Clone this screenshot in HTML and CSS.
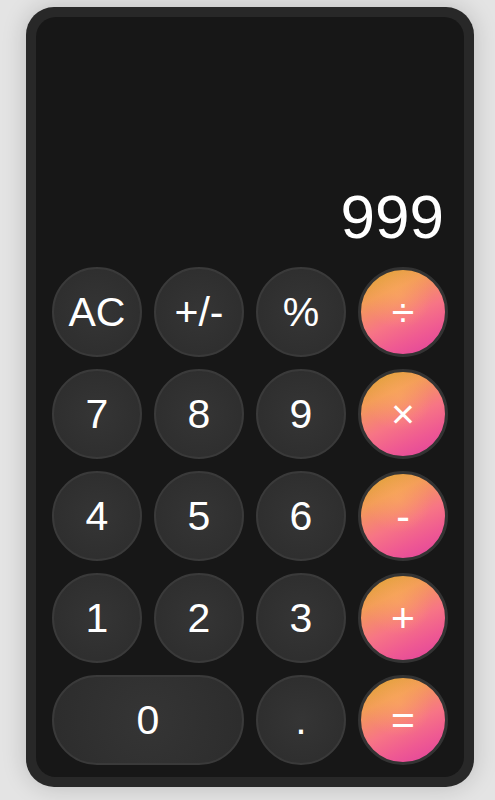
FILE: index.html
```html
<!DOCTYPE html>
<html>
<head>
<meta charset="utf-8">
<link rel="stylesheet" href="styles.css">
</head>
<body>
<div class="calc">
  <div class="screen">
    <div class="display">999</div>
    <div class="keys">
      <button class="key">AC</button>
      <button class="key">+/-</button>
      <button class="key">%</button>
      <button class="key op">÷</button>
      <button class="key">7</button>
      <button class="key">8</button>
      <button class="key">9</button>
      <button class="key op">×</button>
      <button class="key">4</button>
      <button class="key">5</button>
      <button class="key">6</button>
      <button class="key op">-</button>
      <button class="key">1</button>
      <button class="key">2</button>
      <button class="key">3</button>
      <button class="key op">+</button>
      <button class="key wide">0</button>
      <button class="key">.</button>
      <button class="key op">=</button>
    </div>
  </div>
</div>
</body>
</html>
```
FILE: styles.css
```css
html, body {
  margin: 0;
  padding: 0;
}
body {
  background: #e4e4e4;
  font-family: "Liberation Sans", Arial, sans-serif;
  height: 800px;
  overflow: hidden;
}
.calc {
  margin: 7px 0 0 26px;
  width: 448px;
  height: 780px;
  box-sizing: border-box;
  background: #282828;
  border-radius: 28px;
  padding: 10px;
  box-shadow: 0 0 24px rgba(0, 0, 0, 0.18);
}
.screen {
  height: 100%;
  background: #171717;
  border-radius: 20px;
  display: flex;
  flex-direction: column;
  box-sizing: border-box;
  padding: 0 16px 12px;
}
.display {
  flex: 1;
  display: flex;
  justify-content: flex-end;
  align-items: flex-end;
  color: #fff;
  font-size: 62px;
  line-height: 1;
  padding: 0 4px 19px 0;
}
.keys {
  display: grid;
  grid-template-columns: repeat(4, 90px);
  grid-auto-rows: 90px;
  gap: 12px;
}
.key {
  border: 2px solid #3a3a3a;
  border-radius: 45px;
  background: radial-gradient(circle at 50% 50%, #353535 0%, #2c2c2c 100%);
  color: #fff;
  font-family: "Liberation Sans", Arial, sans-serif;
  font-size: 41px;
  padding: 0;
  display: flex;
  align-items: center;
  justify-content: center;
  box-sizing: border-box;
}
.wide {
  grid-column: span 2;
}
.op {
  border: 3px solid #333;
  background:
    radial-gradient(circle at 45% 30%, rgba(255, 180, 95, 0.4) 0%, rgba(255, 180, 95, 0) 45%),
    linear-gradient(155deg, #d6a22a 0%, #f39c58 28%, #f77585 55%, #ef5a92 75%, #df409e 100%);
}
```
